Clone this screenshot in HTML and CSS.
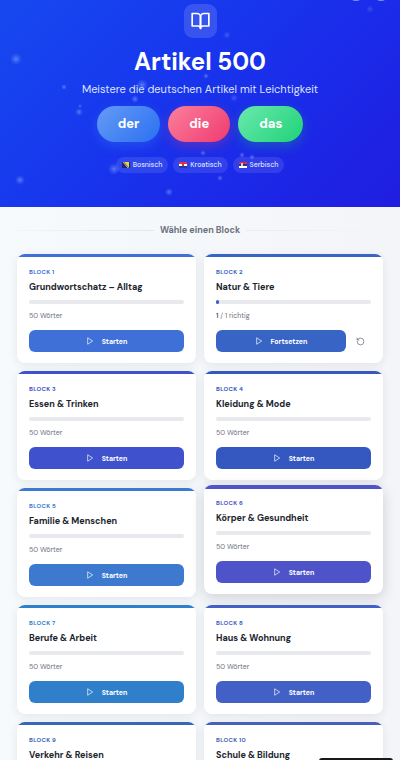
FILE: index.html
```html
<!DOCTYPE html>
<html lang="de">
<head>
    <meta charset="UTF-8">
    <meta name="viewport" content="width=device-width, initial-scale=1.0">
    <title>Artikel 500</title>
    <link rel="stylesheet" href="styles.css">
</head>
<body>
    <svg class="sprite" aria-hidden="true">
        <symbol id="play" viewBox="0 0 24 24"><path d="M6 3l14 9-14 9z"/></symbol>
        <symbol id="reset" viewBox="0 0 24 24"><path d="M3 12a9 9 0 1 0 9-9 9.75 9.75 0 0 0-6.74 2.74L3 8"/><path d="M3 3v5h5"/></symbol>
    </svg>
    <header class="hero">
        <svg class="particles" width="400" height="207" aria-hidden="true">
            <defs>
                <radialGradient id="glow">
                    <stop offset="0" stop-color="#a5c4ff" stop-opacity=".5"/>
                    <stop offset=".5" stop-color="#7ea6ff" stop-opacity=".25"/>
                    <stop offset="1" stop-color="#7ea6ff" stop-opacity="0"/>
                </radialGradient>
            </defs>
            <g fill="url(#glow)">
                <circle cx="16" cy="59" r="6"/>
                <circle cx="64" cy="87" r="3"/>
                <circle cx="142" cy="85" r="6"/>
                <circle cx="135" cy="99" r="4"/>
                <circle cx="79" cy="112" r="4"/>
                <circle cx="80" cy="106" r="2"/>
                <circle cx="114" cy="169" r="6"/>
                <circle cx="20" cy="180" r="5"/>
                <circle cx="169" cy="192" r="4"/>
                <circle cx="220" cy="178" r="3"/>
                <circle cx="242" cy="155" r="3"/>
                <circle cx="252" cy="157" r="3"/>
                <circle cx="203" cy="153" r="3"/>
                <circle cx="227" cy="35" r="4" opacity=".6"/>
                <circle cx="206" cy="76" r="3"/>
                <circle cx="234" cy="98" r="4" opacity=".6"/>
                <circle cx="370" cy="9" r="4" opacity=".5"/>
            </g>
        </svg>
        <div class="tools">
            <button class="tool" type="button" aria-label="Sprache"></button>
            <button class="tool" type="button" aria-label="Profil"></button>
        </div>
        <div class="logo">
            <svg viewBox="0 0 24 24"><path d="M2 3h6a4 4 0 0 1 4 4v14a3 3 0 0 0-3-3H2z"/><path d="M22 3h-6a4 4 0 0 0-4 4v14a3 3 0 0 1 3-3h7z"/></svg>
        </div>
        <h1>Artikel 500</h1>
        <p class="subtitle">Meistere die deutschen Artikel mit Leichtigkeit</p>
        <div class="articles">
            <span class="article der">der</span>
            <span class="article die">die</span>
            <span class="article das">das</span>
        </div>
        <ul class="langs">
            <li>
                <svg class="flag" viewBox="0 0 8 6"><path fill="#1b2a70" d="M0 0h8v6H0z"/><path fill="#f5cf3c" d="M2 0h5v6z"/><path d="M1 0l5 6" stroke="#fff" stroke-width=".6" stroke-dasharray=".6 .5"/></svg>
                Bosnisch
            </li>
            <li>
                <svg class="flag" viewBox="0 0 8 6"><path fill="#e5333d" d="M0 0h8v2H0z"/><path fill="#fff" d="M0 2h8v2H0z"/><path fill="#26389b" d="M0 4h8v2H0z"/><path fill="#d9343f" d="M3 1h2v3H3z"/></svg>
                Kroatisch
            </li>
            <li>
                <svg class="flag" viewBox="0 0 8 6"><path fill="#d6303c" d="M0 0h8v2H0z"/><path fill="#26387f" d="M0 2h8v2H0z"/><path fill="#fff" d="M0 4h8v2H0z"/><path fill="#e9c3c8" d="M2 1h2v3H2z"/></svg>
                Serbisch
            </li>
        </ul>
    </header>
    <main>
        <h2 class="divider">Wähle einen Block</h2>
        <div class="grid">
            <article class="card c1">
                <p class="label">Block 1</p>
                <h3>Grundwortschatz – Alltag</h3>
                <div class="bar"></div>
                <p class="meta">50 Wörter</p>
                <div class="actions"><button class="start" type="button"><svg><use href="#play"/></svg>Starten</button></div>
            </article>
            <article class="card c2">
                <p class="label">Block 2</p>
                <h3>Natur &amp; Tiere</h3>
                <div class="bar"><div class="fill" style="width: 2%"></div></div>
                <p class="meta"><b>1</b> / 1 richtig</p>
                <div class="actions">
                    <button class="start" type="button"><svg><use href="#play"/></svg>Fortsetzen</button>
                    <button class="reset" type="button" aria-label="Zurücksetzen"><svg><use href="#reset"/></svg></button>
                </div>
            </article>
            <article class="card c3">
                <p class="label">Block 3</p>
                <h3>Essen &amp; Trinken</h3>
                <div class="bar"></div>
                <p class="meta">50 Wörter</p>
                <div class="actions"><button class="start" type="button"><svg><use href="#play"/></svg>Starten</button></div>
            </article>
            <article class="card c4">
                <p class="label">Block 4</p>
                <h3>Kleidung &amp; Mode</h3>
                <div class="bar"></div>
                <p class="meta">50 Wörter</p>
                <div class="actions"><button class="start" type="button"><svg><use href="#play"/></svg>Starten</button></div>
            </article>
            <article class="card c5">
                <p class="label">Block 5</p>
                <h3>Familie &amp; Menschen</h3>
                <div class="bar"></div>
                <p class="meta">50 Wörter</p>
                <div class="actions"><button class="start" type="button"><svg><use href="#play"/></svg>Starten</button></div>
            </article>
            <article class="card c6 active">
                <p class="label">Block 6</p>
                <h3>Körper &amp; Gesundheit</h3>
                <div class="bar"></div>
                <p class="meta">50 Wörter</p>
                <div class="actions"><button class="start" type="button"><svg><use href="#play"/></svg>Starten</button></div>
            </article>
            <article class="card c7">
                <p class="label">Block 7</p>
                <h3>Berufe &amp; Arbeit</h3>
                <div class="bar"></div>
                <p class="meta">50 Wörter</p>
                <div class="actions"><button class="start" type="button"><svg><use href="#play"/></svg>Starten</button></div>
            </article>
            <article class="card c8">
                <p class="label">Block 8</p>
                <h3>Haus &amp; Wohnung</h3>
                <div class="bar"></div>
                <p class="meta">50 Wörter</p>
                <div class="actions"><button class="start" type="button"><svg><use href="#play"/></svg>Starten</button></div>
            </article>
            <article class="card c9">
                <p class="label">Block 9</p>
                <h3>Verkehr &amp; Reisen</h3>
                <div class="bar"></div>
                <p class="meta">50 Wörter</p>
                <div class="actions"><button class="start" type="button"><svg><use href="#play"/></svg>Starten</button></div>
            </article>
            <article class="card c10">
                <p class="label">Block 10</p>
                <h3>Schule &amp; Bildung</h3>
                <div class="bar"></div>
                <p class="meta">50 Wörter</p>
                <div class="actions"><button class="start" type="button"><svg><use href="#play"/></svg>Starten</button></div>
            </article>
        </div>
    </main>
    <div class="badge"></div>
</body>
</html>
```
FILE: styles.css
```css
*{
    margin: 0;
    padding: 0;
    box-sizing: border-box;
}
html{
    scrollbar-width: none;
}
body{
    font-family: "DM Sans", Inter, "Liberation Sans", sans-serif;
    background: linear-gradient(90deg, #f6fafc, #f4f5f8);
    color: #20242c;
}
ul{
    list-style: none;
}
button{
    font-family: inherit;
    border: 0;
    cursor: pointer;
}
svg{
    fill: none;
    stroke: currentColor;
    stroke-width: 2;
    stroke-linecap: round;
    stroke-linejoin: round;
}
.sprite{
    display: none;
}

/* header */
.hero{
    position: relative;
    overflow: hidden;
    display: flex;
    flex-direction: column;
    align-items: center;
    padding: 4px 16px 34px;
    color: #fff;
    background: linear-gradient(135deg, #1749ef 0%, #1739ee 35%, #1b2be9 65%, #201de0 100%);
}
.particles{
    position: absolute;
    top: 0;
    left: 0;
    stroke: none;
}
.tools{
    position: absolute;
    top: -15px;
    right: 11px;
    display: flex;
    gap: 9px;
}
.tool{
    width: 16px;
    height: 16px;
    border-radius: 50%;
    background: #8198f5;
}
.logo{
    display: flex;
    align-items: center;
    justify-content: center;
    width: 33px;
    height: 34px;
    border-radius: 9px;
    background: rgba(255,255,255,0.14);
}
.logo svg{
    width: 21px;
    height: 20px;
}
h1{
    margin-top: 8px;
    font-size: 24px;
    line-height: 32px;
    font-weight: 700;
}
.subtitle{
    margin-top: 4px;
    font-size: 11px;
    line-height: 14px;
    color: #dde5ff;
}
.articles{
    display: flex;
    gap: 8px;
    margin-top: 10px;
}
.article{
    padding: 0 21px;
    border-radius: 18px;
    text-align: center;
    font-size: 13px;
    line-height: 36px;
    font-weight: 700;
    z-index: 1;
}
.der{
    background: linear-gradient(135deg, #659bf5, #2b70f2);
    box-shadow: 0 4px 12px rgba(59,130,246,0.35);
}
.die{
    background: linear-gradient(135deg, #fb7f9c, #ef3b70);
    box-shadow: 0 4px 12px rgba(244,63,94,0.3);
}
.das{
    background: linear-gradient(135deg, #6be9ae, #1fd277);
    box-shadow: 0 4px 12px rgba(34,197,94,0.3);
}
.langs{
    display: flex;
    gap: 5px;
    margin-top: 15px;
}
.langs li{
    display: flex;
    align-items: center;
    gap: 3px;
    padding: 0 6px;
    border-radius: 8px;
    font-size: 7px;
    line-height: 16px;
    font-weight: 500;
    color: #dfe5ff;
    background: rgba(255,255,255,0.1);
}
.flag{
    width: 8px;
    height: 6px;
    stroke: none;
}

/* blocks */
main{
    padding: 16px 17px;
}
.divider{
    display: flex;
    align-items: center;
    gap: 6px;
    margin-bottom: 16px;
    font-size: 9px;
    line-height: 15px;
    font-weight: 700;
    color: #6b7280;
}
.divider::before,
.divider::after{
    content: "";
    flex: 1;
    height: 1px;
    background: linear-gradient(90deg, #f3f6f8, #e3e7eb);
}
.divider::after{
    background: linear-gradient(90deg, #e9ecf0, #f4f5f8);
}
.grid{
    display: grid;
    grid-template-columns: 1fr 1fr;
    gap: 8px;
}
.card{
    --c: #3f70d8;
    position: relative;
    overflow: hidden;
    padding: 14px 12px 11px;
    border-radius: 8px;
    background: #fff;
    box-shadow: 0 2px 10px rgba(30,41,59,0.09);
}
.card::before{
    content: "";
    position: absolute;
    top: 0;
    left: 0;
    right: 0;
    height: 3px;
    background: var(--c);
}
.c2{ --c: #3865c5; }
.c3{ --c: #3f51cc; }
.c4{ --c: #3558c0; }
.c5{ --c: #3d7acf; }
.c6{ --c: #4e53c9; }
.c7{ --c: #307fcb; }
.c8{ --c: #4260c6; }
.c9{ --c: #3a66b8; }
.c10{ --c: #4760b8; }
/* lifted card */
.active{
    transform: translateY(-3px);
    box-shadow: 0 4px 14px rgba(30,41,59,0.18);
}
.active::before{
    height: 4px;
}
.label{
    font-size: 6px;
    line-height: 8px;
    font-weight: 700;
    letter-spacing: 0.05em;
    text-transform: uppercase;
    color: var(--c);
}
h3{
    margin-top: 4px;
    font-size: 9px;
    line-height: 14px;
    font-weight: 700;
    white-space: nowrap;
}
.bar{
    height: 4px;
    margin-top: 6px;
    border-radius: 2px;
    background: #e8e9ed;
}
.fill{
    height: 4px;
    border-radius: 2px;
    background: var(--c);
}
.meta{
    margin-top: 6px;
    font-size: 7px;
    line-height: 12px;
    color: #6b7280;
}
.meta b{
    font-weight: 600;
    color: #475a80;
}
.actions{
    display: flex;
    gap: 4px;
    margin-top: 8px;
}
.start{
    display: flex;
    flex: 1;
    align-items: center;
    justify-content: center;
    gap: 8px;
    height: 22px;
    border-radius: 6px;
    font-size: 7px;
    font-weight: 700;
    color: #fff;
    background: var(--c);
}
.start svg,
.reset svg{
    width: 8px;
    height: 8px;
}
.reset svg{
    width: 9px;
    height: 9px;
}
.reset{
    display: flex;
    align-items: center;
    justify-content: center;
    width: 21px;
    background: none;
    color: #6b7280;
}
.badge{
    position: fixed;
    right: 7px;
    bottom: -18px;
    width: 74px;
    height: 20px;
    border-radius: 3px;
    background: #17181c;
}
```
